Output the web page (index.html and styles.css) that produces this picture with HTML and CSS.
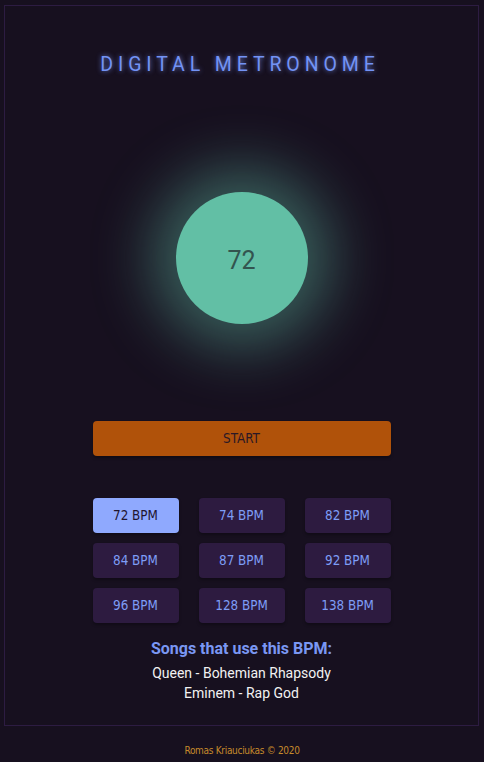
FILE: index.html
```html
<!DOCTYPE html>
<html lang="en">
<head>
<meta charset="utf-8">
<title>Digital Metronome</title>
<link rel="stylesheet" href="styles.css">
</head>
<body>
<main class="card">
  <h1 class="title">DIGITAL METRONOME</h1>
  <div class="pulse"><span class="bpm-value">72</span></div>
  <button class="start">START</button>
  <div class="presets">
    <button class="preset active">72 BPM</button>
    <button class="preset">74 BPM</button>
    <button class="preset">82 BPM</button>
    <button class="preset">84 BPM</button>
    <button class="preset">87 BPM</button>
    <button class="preset">92 BPM</button>
    <button class="preset">96 BPM</button>
    <button class="preset">128 BPM</button>
    <button class="preset">138 BPM</button>
  </div>
  <h2 class="songs-title">Songs that use this BPM:</h2>
  <ul class="songs">
    <li>Queen - Bohemian Rhapsody</li>
    <li>Eminem - Rap God</li>
  </ul>
</main>
<footer class="footer">Romas Kriauciukas © 2020</footer>
</body>
</html>
```

FILE: styles.css
```css
html, body {
  margin: 0;
  padding: 0;
}
body {
  background: #17101f;
  font-family: Roboto, "Liberation Sans", sans-serif;
  height: 762px;
  overflow: hidden;
}
.card {
  box-sizing: border-box;
  margin: 5px 5px 0 4px;
  height: 721px;
  border: 1px solid #2d1c42;
  display: flex;
  flex-direction: column;
  align-items: center;
  padding-top: 49px;
}
.title {
  margin: 0;
  font-family: Roboto, sans-serif;
  font-weight: 400;
  font-size: 19.5px;
  line-height: 20px;
  letter-spacing: 4.9px;
  padding-right: 3px;
  color: #7393f5;
  text-shadow: 0 0 5px rgba(110, 140, 245, 0.85);
}
.pulse {
  margin-top: 117px;
  width: 132px;
  height: 132px;
  border-radius: 50%;
  background: #62bfa5;
  box-shadow: 0 0 60px 24px rgba(98, 191, 165, 0.45);
  display: flex;
  align-items: center;
  justify-content: center;
}
.bpm-value {
  font-family: Roboto, sans-serif;
  font-size: 25px;
  color: #33544f;
  line-height: 1;
  padding-top: 5px;
}
.start {
  margin-top: 97px;
  width: 298px;
  height: 35px;
  border: none;
  border-radius: 4px;
  background: #b0520a;
  color: #2a1826;
  font-family: "DejaVu Sans Condensed", "DejaVu Sans", sans-serif;
  font-stretch: condensed;
  font-size: 13.33px;
  box-shadow: 0 2px 3px rgba(0, 0, 0, 0.35);
  padding: 0;
}
.presets {
  margin-top: 42px;
  width: 298px;
  display: grid;
  grid-template-columns: repeat(3, 86px);
  column-gap: 20px;
  row-gap: 10px;
}
.preset {
  height: 35px;
  border: none;
  border-radius: 4px;
  background: #2d1b40;
  color: #7e9df6;
  font-family: "DejaVu Sans Condensed", "DejaVu Sans", sans-serif;
  font-stretch: condensed;
  font-size: 13.33px;
  padding: 0;
  box-shadow: 0 2px 3px rgba(0, 0, 0, 0.3);
}
.preset.active {
  background: #8fa9fe;
  color: #1f1530;
}
.songs-title {
  margin: 16px 0 0;
  font-family: Roboto, sans-serif;
  font-weight: 700;
  font-size: 16px;
  line-height: 20px;
  color: #7a97f3;
}
.songs {
  list-style: none;
  margin: 4px 0 0;
  padding: 0;
  text-align: center;
  font-family: Roboto, sans-serif;
  font-size: 14px;
  line-height: 20px;
  color: #f2f2f2;
}
.footer {
  margin-top: 19px;
  text-align: center;
  font-family: "DejaVu Sans Condensed", "DejaVu Sans", sans-serif;
  font-stretch: condensed;
  font-size: 10px;
  line-height: 12px;
  letter-spacing: -0.3px;
  color: #c68a2b;
}
```
